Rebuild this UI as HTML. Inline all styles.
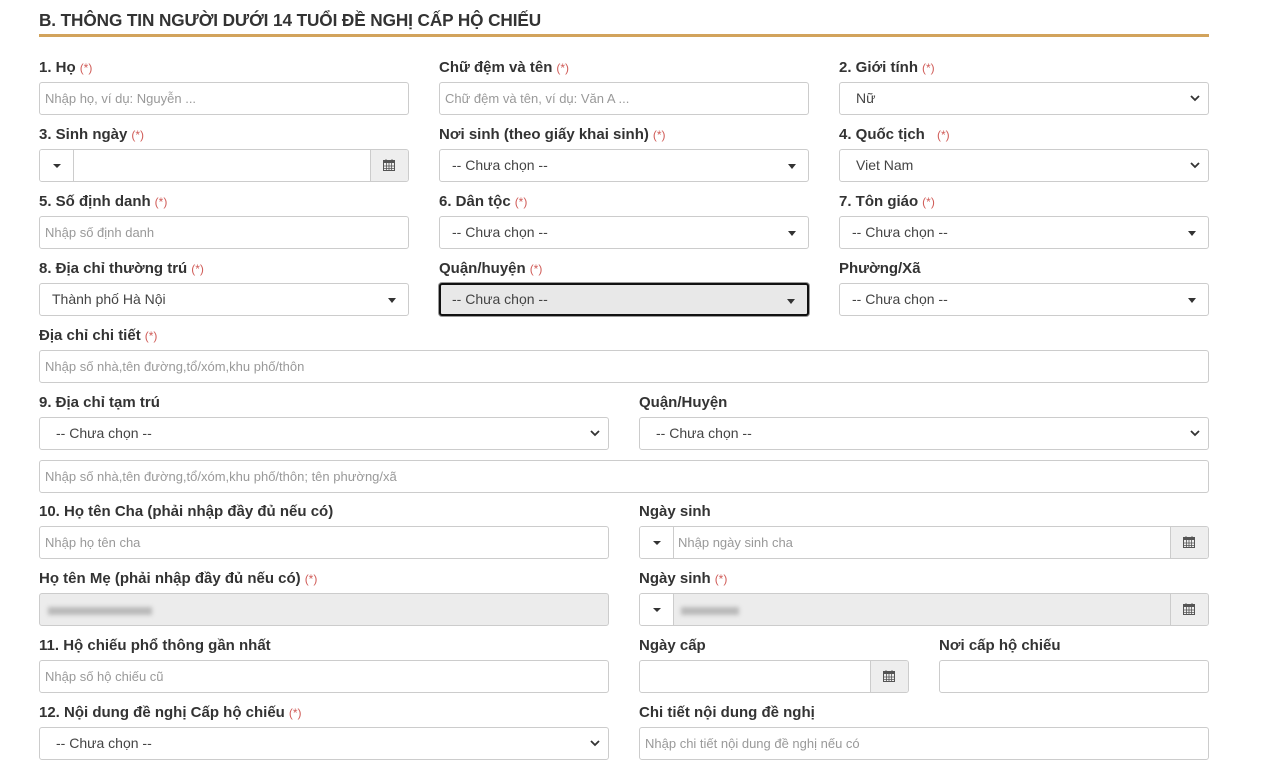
<!DOCTYPE html>
<html><head><meta charset="utf-8"><style>
*{box-sizing:border-box;margin:0;padding:0}
body{width:1264px;height:782px;background:#fff;position:relative;overflow:hidden;font-family:"Liberation Sans",Arial,sans-serif;color:#333}
.h{position:absolute;left:39px;top:10px;font-size:17.2px;font-weight:bold;color:#333;letter-spacing:-0.1px}
.hl{position:absolute;left:39px;top:34px;width:1170px;height:3px;background:#d2a35c}
.l{position:absolute;font-size:15px;font-weight:bold;color:#333;line-height:16px;margin-top:1px}
.l b{font-weight:normal;color:#d05c58;font-size:12px;margin-left:4px}
.b{position:absolute;height:33px;border:1px solid #ccc;border-radius:3px;background:#fff;font-size:13px;line-height:31px;color:#999;padding-left:5px;white-space:nowrap;overflow:hidden}
.s{color:#444;padding-left:12px;font-size:14px}
.car:after{content:"";position:absolute;right:12px;top:14px;border-left:4px solid transparent;border-right:4px solid transparent;border-top:5px solid #333}
.chev svg{position:absolute;right:8px;top:12px}
.g{background:#ececec}
.blur{display:inline-block;height:8px;background:#b9b9b9;filter:blur(2px);vertical-align:middle;margin-left:3px}
.lb{position:absolute;left:0;top:0;width:34px;height:31px;border-right:1px solid #ccc;background:#fff}
.lb:after{content:"";position:absolute;left:13px;top:14px;border-left:4px solid transparent;border-right:4px solid transparent;border-top:4px solid #333}
.rb{position:absolute;right:0;top:0;width:38px;height:31px;border-left:1px solid #ccc;background:#eee}
.rb svg{position:absolute;left:12px;top:9px}
</style></head><body>
<div class="h">B. THÔNG TIN NGƯỜI DƯỚI 14 TUỔI ĐỀ NGHỊ CẤP HỘ CHIẾU</div>
<div class="hl"></div>

<svg width="0" height="0" style="position:absolute"><defs>
<g id="cal"><rect x="0.5" y="1.5" width="11" height="10" fill="none" stroke="#555"/><rect x="0.5" y="1.5" width="11" height="2.5" fill="#555"/><path d="M3 0v3M9 0v3M0.5 7h11M0.5 9.5h11M3.5 4v7M6 4v7M8.5 4v7" stroke="#555" stroke-width="0.8"/></g>
<path id="ch" d="M1 1l4 4 4-4" fill="none" stroke="#333" stroke-width="1.8"/>
</defs></svg>

<div class="l" style="left:39px;top:59px">1. Họ<b>(*)</b></div>
<div class="l" style="left:439px;top:59px">Chữ đệm và tên<b>(*)</b></div>
<div class="l" style="left:839px;top:59px">2. Giới tính<b>(*)</b></div>
<div class="b" style="left:39px;top:82px;width:370px">Nhập họ, ví dụ: Nguyễn ...</div>
<div class="b" style="left:439px;top:82px;width:370px">Chữ đệm và tên, ví dụ: Văn A ...</div>
<div class="b s chev" style="left:839px;top:82px;width:370px;padding-left:16px">Nữ<svg width="10" height="7"><use href="#ch"/></svg></div>

<div class="l" style="left:39px;top:126px">3. Sinh ngày<b>(*)</b></div>
<div class="l" style="left:439px;top:126px">Nơi sinh (theo giấy khai sinh)<b>(*)</b></div>
<div class="l" style="left:839px;top:126px">4. Quốc tịch <b style="margin-left:8px">(*)</b></div>
<div class="b" style="left:39px;top:149px;width:370px"><div class="lb"></div><div class="rb"><svg width="12" height="12"><use href="#cal"/></svg></div></div>
<div class="b s car" style="left:439px;top:149px;width:370px">-- Chưa chọn --</div>
<div class="b s chev" style="left:839px;top:149px;width:370px;padding-left:16px">Viet Nam<svg width="10" height="7"><use href="#ch"/></svg></div>

<div class="l" style="left:39px;top:193px">5. Số định danh<b>(*)</b></div>
<div class="l" style="left:439px;top:193px">6. Dân tộc<b>(*)</b></div>
<div class="l" style="left:839px;top:193px">7. Tôn giáo<b>(*)</b></div>
<div class="b" style="left:39px;top:216px;width:370px">Nhập số định danh</div>
<div class="b s car" style="left:439px;top:216px;width:370px">-- Chưa chọn --</div>
<div class="b s car" style="left:839px;top:216px;width:370px">-- Chưa chọn --</div>

<div class="l" style="left:39px;top:260px">8. Địa chỉ thường trú<b>(*)</b></div>
<div class="l" style="left:439px;top:260px">Quận/huyện<b>(*)</b></div>
<div class="l" style="left:839px;top:260px">Phường/Xã</div>
<div class="b s car" style="left:39px;top:283px;width:370px">Thành phố Hà Nội</div>
<div class="b s car" style="left:439px;top:283px;width:370px;background:#e8e8e8;border:2px solid #111;box-shadow:0 0 0 1px #999;line-height:29px;padding-left:11px">-- Chưa chọn --</div>
<div class="b s car" style="left:839px;top:283px;width:370px">-- Chưa chọn --</div>

<div class="l" style="left:39px;top:327px">Địa chỉ chi tiết<b>(*)</b></div>
<div class="b" style="left:39px;top:350px;width:1170px">Nhập số nhà,tên đường,tổ/xóm,khu phố/thôn</div>

<div class="l" style="left:39px;top:394px">9. Địa chỉ tạm trú</div>
<div class="l" style="left:639px;top:394px">Quận/Huyện</div>
<div class="b s chev" style="left:39px;top:417px;width:570px;padding-left:16px">-- Chưa chọn --<svg width="10" height="7"><use href="#ch"/></svg></div>
<div class="b s chev" style="left:639px;top:417px;width:570px;padding-left:16px">-- Chưa chọn --<svg width="10" height="7"><use href="#ch"/></svg></div>
<div class="b" style="left:39px;top:460px;width:1170px">Nhập số nhà,tên đường,tổ/xóm,khu phố/thôn; tên phường/xã</div>

<div class="l" style="left:39px;top:503px">10. Họ tên Cha (phải nhập đầy đủ nếu có)</div>
<div class="l" style="left:639px;top:503px">Ngày sinh</div>
<div class="b" style="left:39px;top:526px;width:570px">Nhập họ tên cha</div>
<div class="b" style="left:639px;top:526px;width:570px;padding-left:38px"><div class="lb"></div>Nhập ngày sinh cha<div class="rb"><svg width="12" height="12"><use href="#cal"/></svg></div></div>

<div class="l" style="left:39px;top:570px">Họ tên Mẹ (phải nhập đầy đủ nếu có)<b>(*)</b></div>
<div class="l" style="left:639px;top:570px">Ngày sinh<b>(*)</b></div>
<div class="b g" style="left:39px;top:593px;width:570px"><span class="blur" style="width:104px"></span></div>
<div class="b g" style="left:639px;top:593px;width:570px;padding-left:38px"><div class="lb"></div><span class="blur" style="width:58px"></span><div class="rb"><svg width="12" height="12"><use href="#cal"/></svg></div></div>

<div class="l" style="left:39px;top:637px">11. Hộ chiếu phổ thông gần nhất</div>
<div class="l" style="left:639px;top:637px">Ngày cấp</div>
<div class="l" style="left:939px;top:637px">Nơi cấp hộ chiếu</div>
<div class="b" style="left:39px;top:660px;width:570px">Nhập số hộ chiếu cũ</div>
<div class="b" style="left:639px;top:660px;width:270px"><div class="rb"><svg width="12" height="12"><use href="#cal"/></svg></div></div>
<div class="b" style="left:939px;top:660px;width:270px"></div>

<div class="l" style="left:39px;top:704px">12. Nội dung đề nghị Cấp hộ chiếu<b>(*)</b></div>
<div class="l" style="left:639px;top:704px">Chi tiết nội dung đề nghị</div>
<div class="b s chev" style="left:39px;top:727px;width:570px;padding-left:16px">-- Chưa chọn --<svg width="10" height="7"><use href="#ch"/></svg></div>
<div class="b" style="left:639px;top:727px;width:570px">Nhập chi tiết nội dung đề nghị nếu có</div>
</body></html>
